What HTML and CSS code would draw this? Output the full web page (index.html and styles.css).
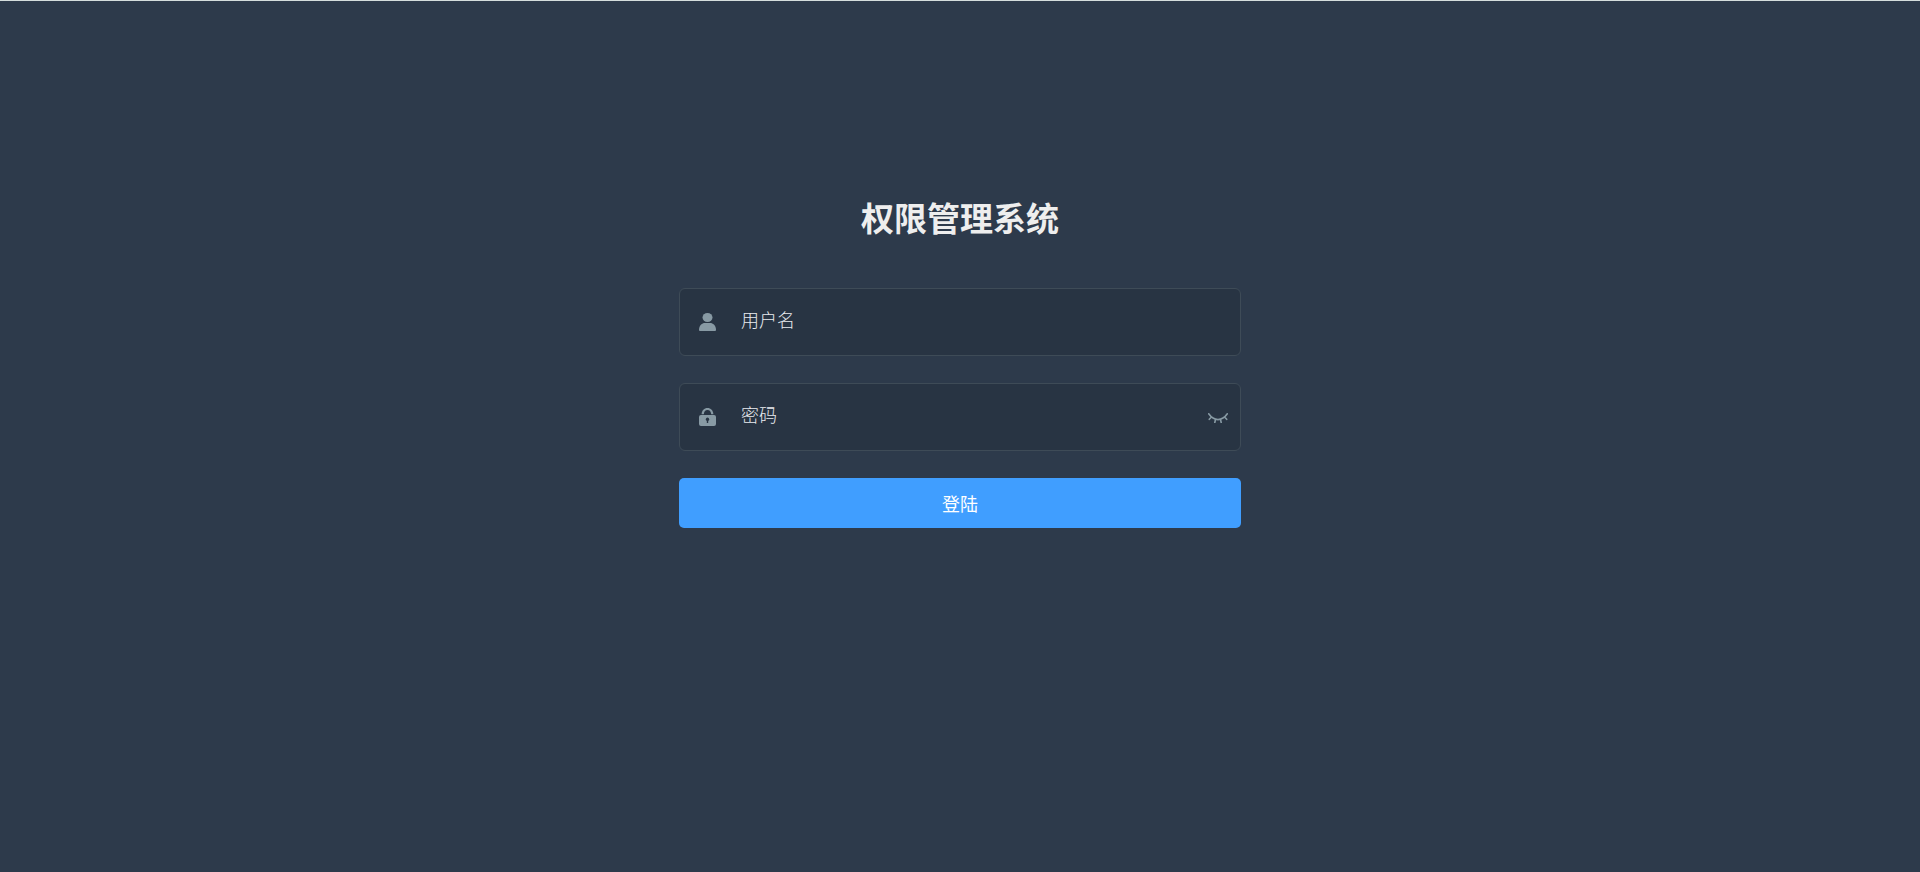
FILE: index.html
```html
<!DOCTYPE html>
<html lang="zh-CN">
  <head>
    <meta charset="UTF-8" />
    <meta name="viewport" content="width=device-width, initial-scale=1.0" />
    <title>权限管理系统</title>
    <link rel="stylesheet" href="styles.css" />
  </head>
  <body>
    <main class="login-container">
      <form class="login-form">
        <h1 class="title">权限管理系统</h1>

        <div class="form-item">
          <label class="icon-box" for="username" aria-label="用户名">
            <svg class="icon" viewBox="0 0 17 18" aria-hidden="true">
              <ellipse cx="8.5" cy="4.500" rx="5" ry="4.500" />
              <path d="M1 18Q0 18 0 17C0 12.500 3 10 6 10h5c3 0 6 2.500 6 7q0 1-1 1z" />
            </svg>
          </label>
          <input id="username" class="input" type="text" name="username" placeholder="用户名" />
        </div>

        <div class="form-item">
          <label class="icon-box" for="password" aria-label="密码">
            <svg class="icon" viewBox="0 0 17 18" aria-hidden="true">
              <path fill-rule="evenodd" d="M2 7h13a2 2 0 0 1 2 2v7a2 2 0 0 1-2 2H2a2 2 0 0 1-2-2V9a2 2 0 0 1 2-2zM7.800 12.900V15h1.400v-2.100a1.700 1.700 0 1 0-1.400 0z" />
              <path d="M2.600 6.200C2.800 2.500 5.200 0 8.500 0s5.700 2.500 5.900 6.200h-2.200C12 3.500 10.600 2 8.500 2S5 3.500 4.800 6.200z" />
            </svg>
          </label>
          <input id="password" class="input" type="password" name="password" placeholder="密码" />
          <button class="show-pwd" type="button" aria-label="显示密码">
            <svg class="eye" viewBox="0 0 20 10" aria-hidden="true">
              <path d="M.7.8C6 8.500 14 8.500 19.300.8M3.500 4L1.300 6.300M7.500 6.500L6.800 9.500M12.500 6.500l.7 3M16.500 4L18.700 6.300" />
            </svg>
          </button>
        </div>

        <button class="login-btn" type="submit">登陆</button>
      </form>
    </main>
  </body>
</html>
```

FILE: styles.css
```css
* {
  box-sizing: border-box;
}

body {
  margin: 0;
  font-family: "Liberation Sans", "Noto Sans CJK SC", sans-serif;
}

.login-container {
  min-height: 100vh;
  border-top: 1px solid #d5dedd;
  background-color: #2d3a4b;
}

.login-form {
  display: flex;
  flex-direction: column;
  width: 100%;
  max-width: 632px;
  margin: 0 auto;
  padding: 197px 35px 0;
}

.title {
  margin: 0 0 47px;
  color: #eee;
  font-size: 33px;
  font-weight: bold;
  line-height: 43px;
  text-align: center;
}

.form-item {
  display: flex;
  align-items: center;
  height: 68px;
  margin-bottom: 27px;
  border: 1px solid #3e4b57;
  border-radius: 6px;
  background-color: #283443;
}

.icon-box {
  display: flex;
  padding: 0 18px 0 19px;
}

.icon {
  width: 17px;
  height: 18px;
  fill: #889aa4;
}

.input {
  flex: 1;
  min-width: 0;
  height: 58px;
  padding: 0 7px 2px;
  border: 0;
  outline: 0;
  background: transparent;
  color: #fff;
  font-family: inherit;
  font-size: 18px;
  font-weight: 300;
}

.input::placeholder {
  color: #e8ebef;
}

.show-pwd {
  display: flex;
  padding: 2px 12px 0;
  border: 0;
  background: transparent;
  cursor: pointer;
}

.eye {
  width: 20px;
  height: 10px;
  fill: none;
  stroke: #889aa4;
  stroke-width: 1.6;
  stroke-linecap: round;
}

.login-btn {
  height: 50px;
  border: 0;
  border-radius: 5px;
  background-color: #409eff;
  color: #fff;
  font-family: inherit;
  font-size: 18px;
  cursor: pointer;
}
```
